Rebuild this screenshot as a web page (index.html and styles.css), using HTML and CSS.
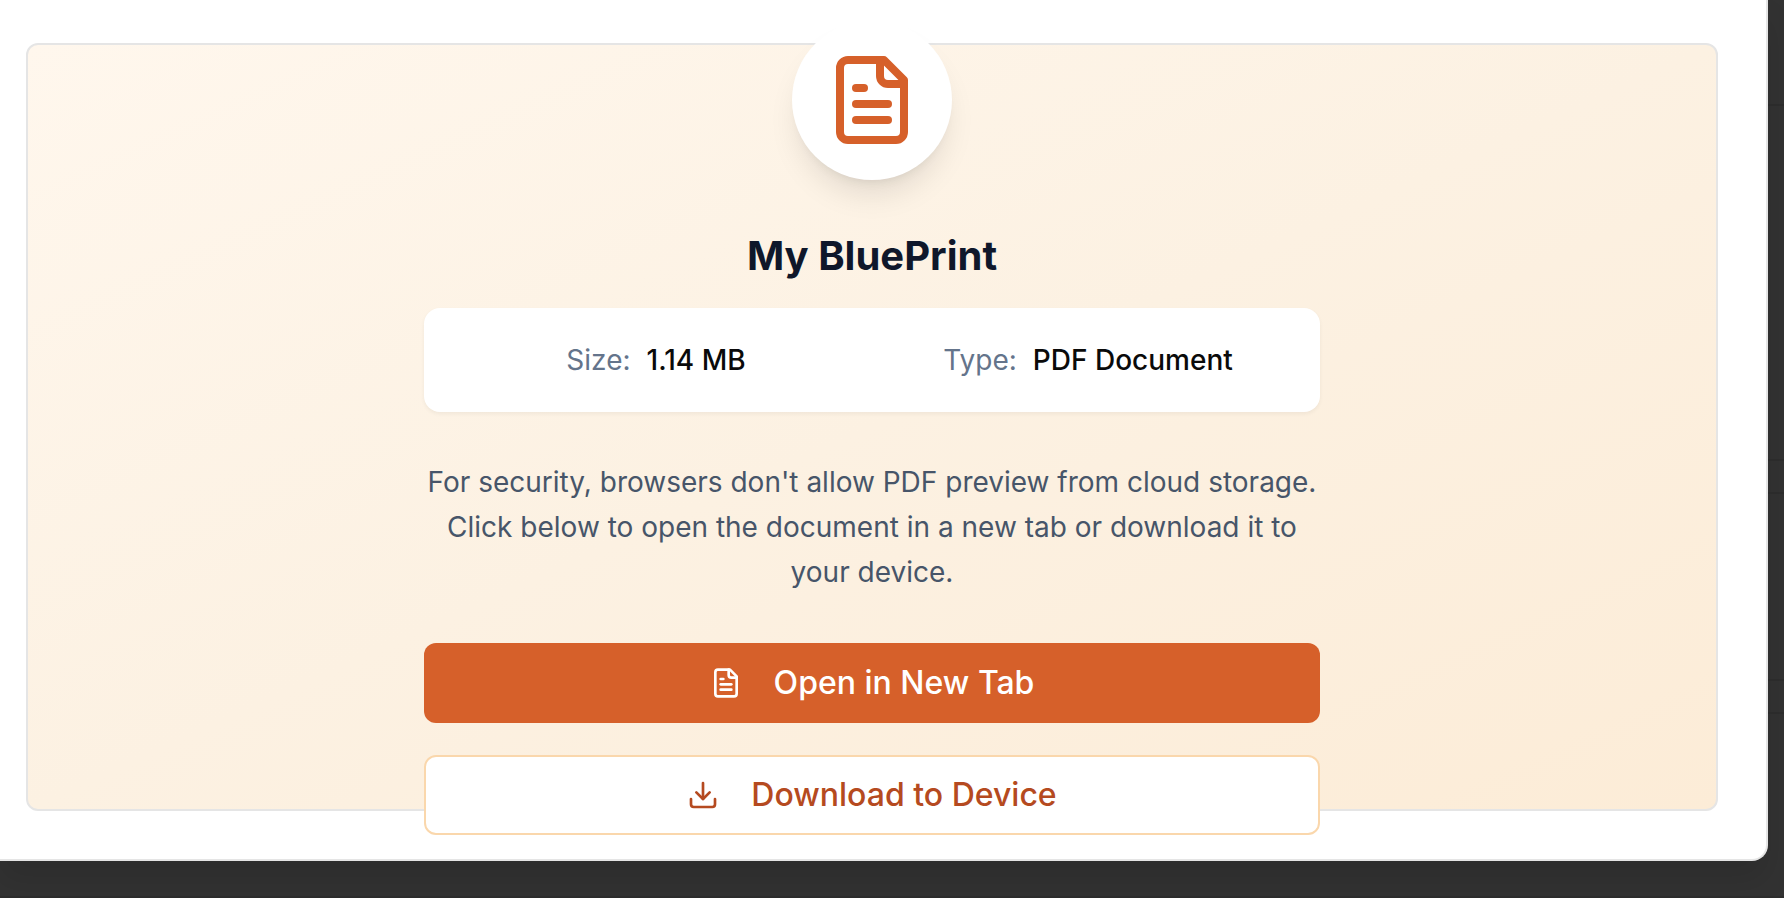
FILE: index.html
```html
<!DOCTYPE html>
<html lang="en">
<head>
<meta charset="utf-8">
<meta name="viewport" content="width=device-width, initial-scale=1">
<title>My BluePrint</title>
<link rel="stylesheet" href="styles.css">
</head>
<body>
<div class="backdrop" aria-hidden="true">
  <div class="row row-head"></div>
  <div class="row row-card"></div>
  <div class="row row-gap"></div>
  <div class="row row-small"></div>
  <div class="row row-gap"></div>
  <div class="row row-last"></div>
</div>
<main class="dialog">
  <section class="preview">
    <div class="content">
      <div class="badge">
        <svg class="badge-icon" viewBox="0 0 24 24" aria-hidden="true">
          <path d="M15 2H6a2 2 0 0 0-2 2v16a2 2 0 0 0 2 2h12a2 2 0 0 0 2-2V7Z"/>
          <path d="M14 2v4a2 2 0 0 0 2 2h4"/>
          <path d="M10 9H8"/><path d="M16 13H8"/><path d="M16 17H8"/>
        </svg>
      </div>
      <h1 class="title">My BluePrint</h1>
      <dl class="facts">
        <div class="fact"><dt>Size:</dt><dd>1.14 MB</dd></div>
        <div class="fact"><dt>Type:</dt><dd>PDF Document</dd></div>
      </dl>
      <p class="note">For security, browsers don't allow PDF preview from cloud storage. Click below to open the document in a new tab or download it to your device.</p>
      <div class="actions">
        <button class="button primary" type="button">
          <svg class="button-icon" viewBox="0 0 24 24" aria-hidden="true">
            <path d="M15 2H6a2 2 0 0 0-2 2v16a2 2 0 0 0 2 2h12a2 2 0 0 0 2-2V7Z"/>
            <path d="M14 2v4a2 2 0 0 0 2 2h4"/>
            <path d="M10 9H8"/><path d="M16 13H8"/><path d="M16 17H8"/>
          </svg>
          Open in New Tab
        </button>
        <button class="button outline" type="button">
          <svg class="button-icon" viewBox="0 0 24 24" aria-hidden="true">
            <path d="M21 15v4a2 2 0 0 1-2 2H5a2 2 0 0 1-2-2v-4"/>
            <path d="m7 10 5 5 5-5"/><path d="M12 15V3"/>
          </svg>
          Download to Device
        </button>
      </div>
    </div>
  </section>
</main>
</body>
</html>
```
FILE: styles.css
```css
* { box-sizing: border-box; }

body {
  margin: 0;
  height: 100vh;
  overflow: hidden;
  background: #323232;
  font-family: Inter, "Liberation Sans", sans-serif;
  color: #0a0a0a;
}

.backdrop {
  position: absolute;
  inset: 0;
  z-index: -1;
  display: flex;
  flex-direction: column;
}
.row { flex-shrink: 0; border-bottom: 2px solid #2d2d2d; }
.row-head { height: 106px; }
.row-card { height: 355px; }
.row-gap { height: 33px; }
.row-small { height: 187px; }
.row-last { height: 184px; }

.dialog {
  margin-right: 16px;
  padding: 43px 48px 48px 26px;
  background: #fff;
  border: solid #e5e5e5;
  border-width: 0 2px 2px 0;
  border-bottom-right-radius: 16px;
  box-shadow: 0 20px 30px rgba(0, 0, 0, 0.1);
}

.preview {
  height: calc(100vh - 130px);
  display: flex;
  align-items: center;
  justify-content: center;
  border: 2px solid #e5e5e5;
  border-radius: 12px;
  background: linear-gradient(to bottom right, #fff7ed, #fcf1e2 50%, #fcecd7);
}

.content {
  width: 896px;
  max-width: 100%;
  display: flex;
  flex-direction: column;
  align-items: center;
}

.badge {
  width: 160px;
  height: 160px;
  display: flex;
  align-items: center;
  justify-content: center;
  border-radius: 50%;
  background: #fff;
  box-shadow: 0 20px 30px -6px rgba(0, 0, 0, 0.1), 0 8px 12px -8px rgba(0, 0, 0, 0.1);
}

svg {
  fill: none;
  stroke: currentColor;
  stroke-width: 2;
  stroke-linecap: round;
  stroke-linejoin: round;
}
.badge-icon { width: 96px; height: 96px; color: #d6602a; }

.title {
  margin: 46px 0 22px;
  font-size: 40px;
  line-height: 60px;
  font-weight: 700;
  color: #0f172a;
}

.facts {
  width: 100%;
  margin: 0;
  padding: 32px;
  display: grid;
  grid-template-columns: 1fr 1fr;
  gap: 32px;
  border-radius: 16px;
  background: #fff;
  box-shadow: 0 2px 4px rgba(0, 0, 0, 0.05);
  font-size: 28px;
  line-height: 40px;
}
.fact { display: flex; justify-content: center; gap: 16px; }
dt { color: #64748b; }
dd { margin: 0; font-weight: 500; }

.note {
  margin: 48px 0;
  font-size: 28px;
  line-height: 45px;
  text-align: center;
  color: #475569;
}

.actions {
  width: 100%;
  display: flex;
  flex-direction: column;
  gap: 32px;
}

.button {
  height: 80px;
  display: flex;
  align-items: center;
  justify-content: center;
  gap: 32px;
  border: 0;
  border-radius: 12px;
  font: 500 32px/48px Inter, "Liberation Sans", sans-serif;
}
.button-icon { width: 32px; height: 32px; }
.primary { background: #d6602a; color: #fff; }
.outline { background: #fff; color: #b54a20; border: 2px solid #fad7ac; }
```
